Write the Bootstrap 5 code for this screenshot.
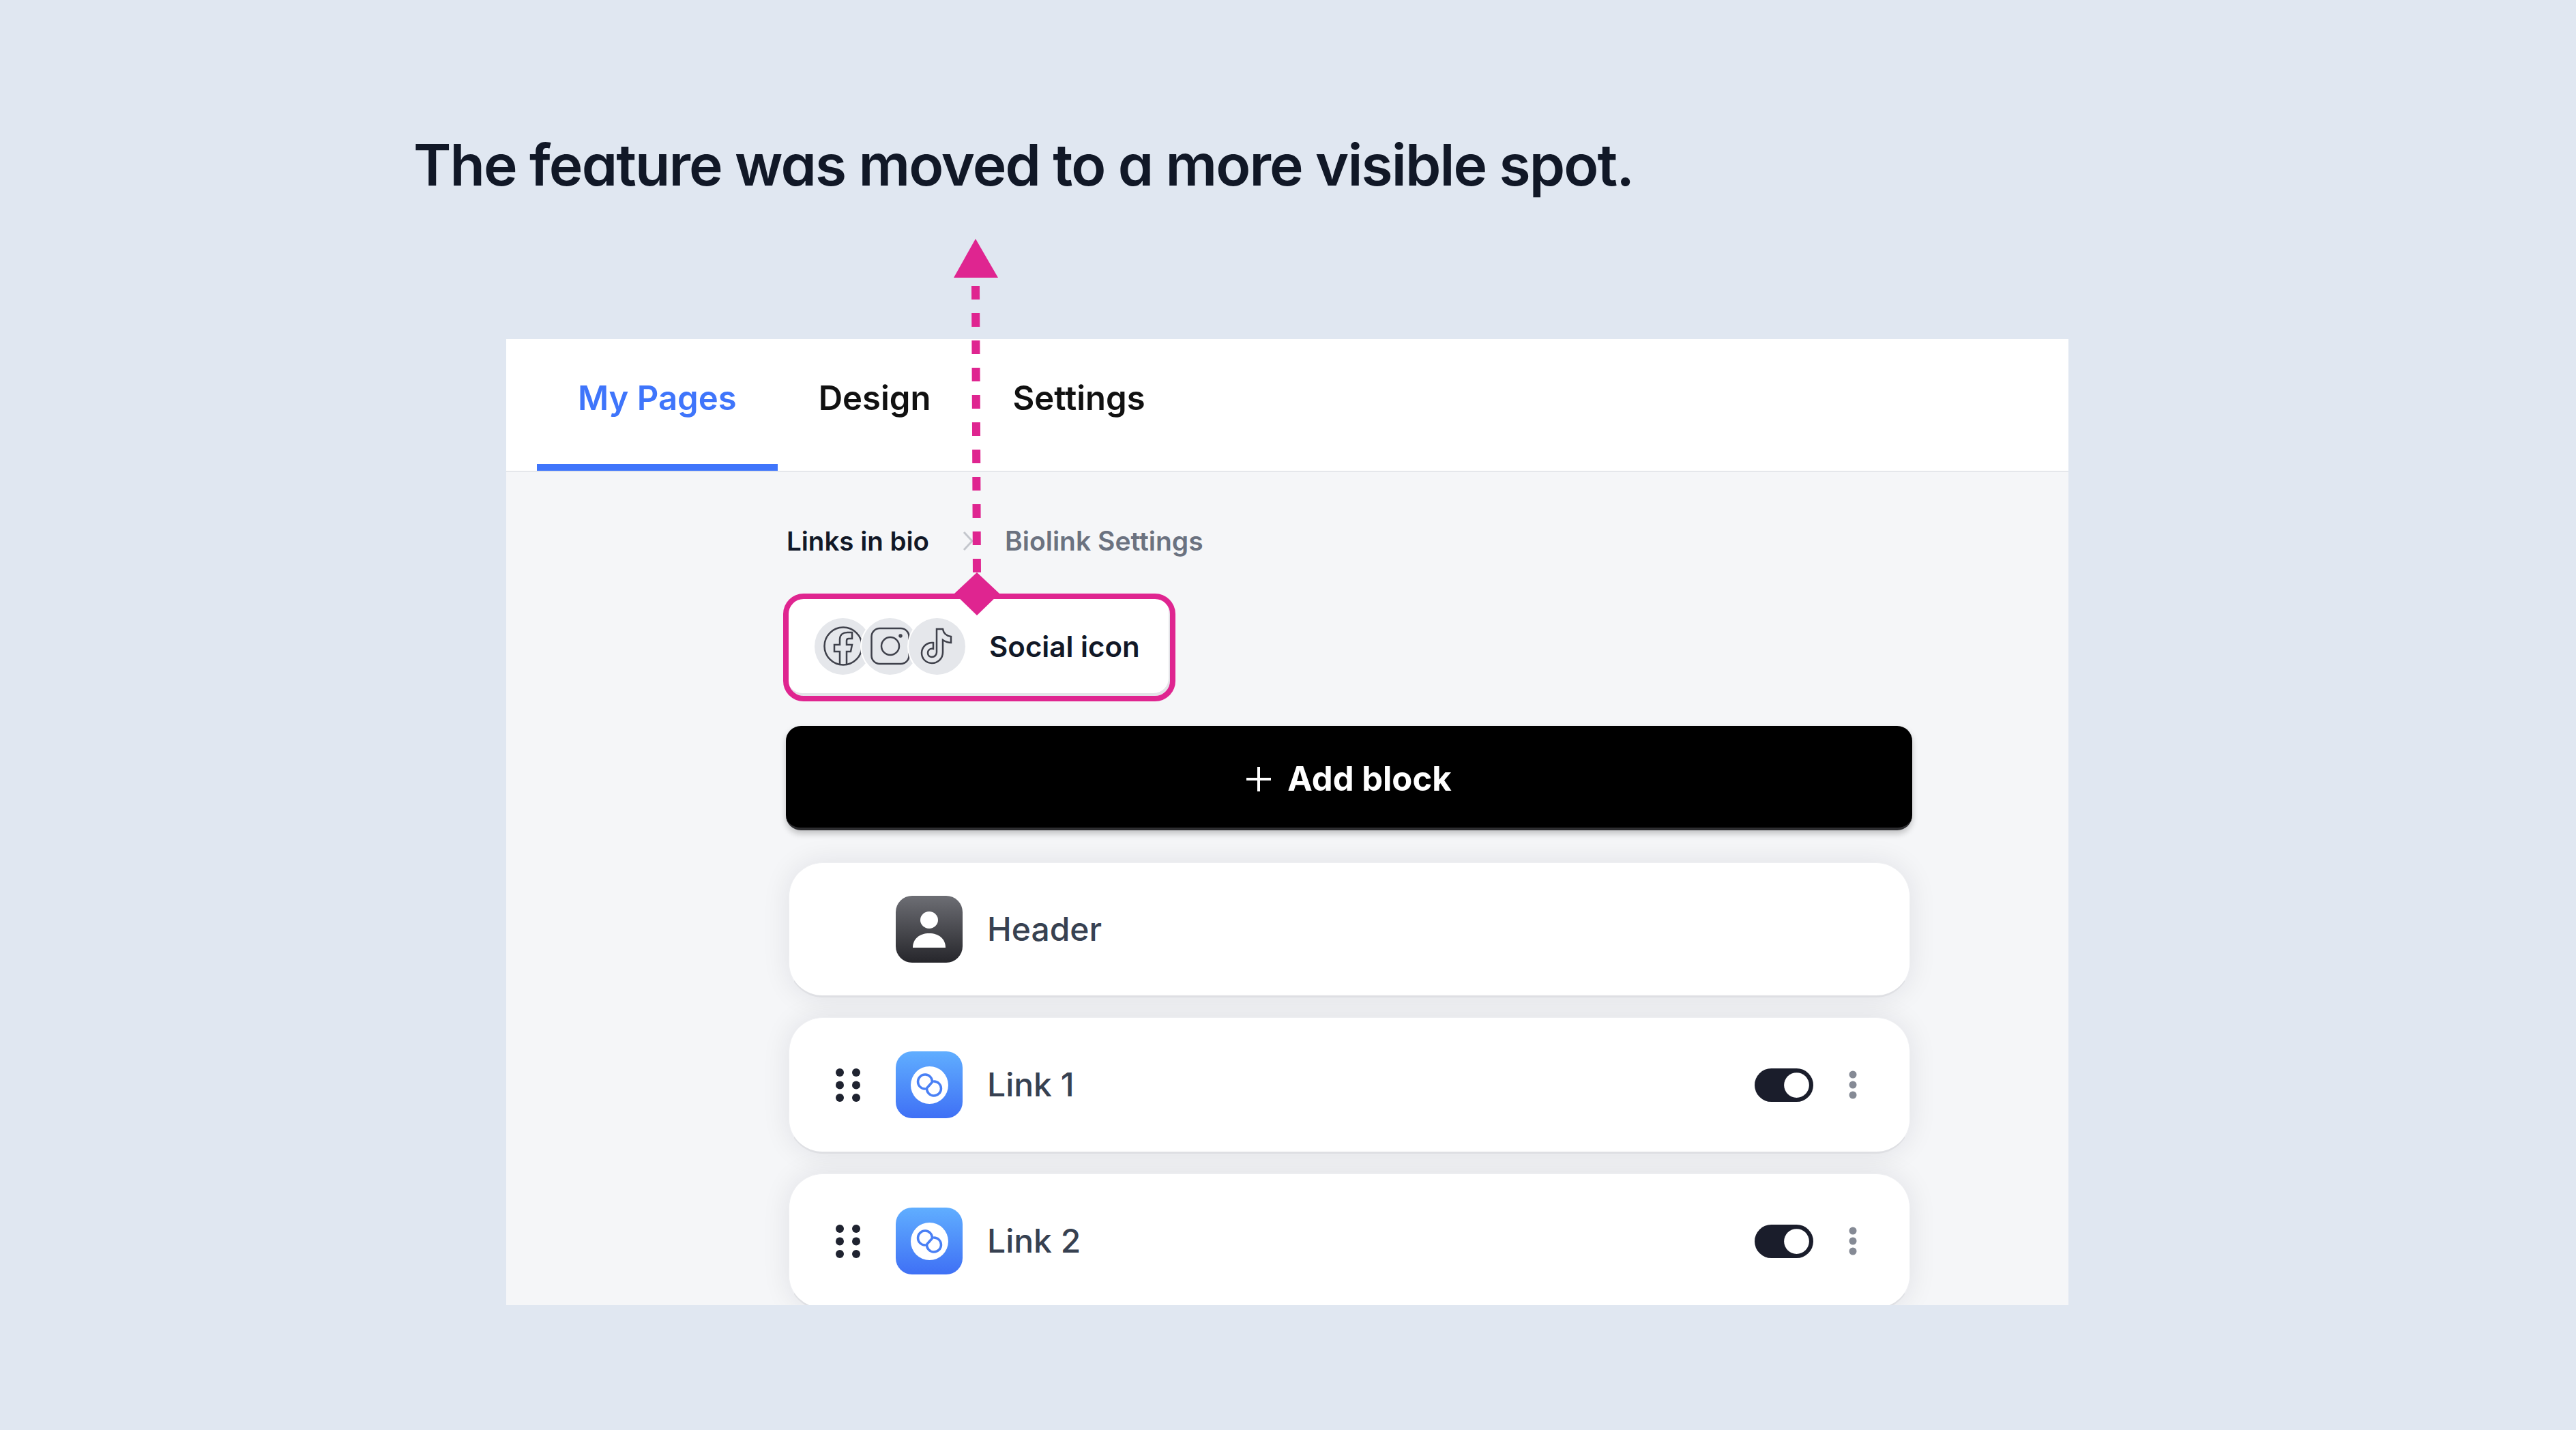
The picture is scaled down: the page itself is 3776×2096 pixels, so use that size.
<!DOCTYPE html>
<html lang="en">
  <head>
    <meta charset="UTF-8" />
    <meta name="viewport" content="width=device-width, initial-scale=1.0" />
    <title>Feature moved</title>
    <link
      href="https://cdn.jsdelivr.net/npm/bootstrap@5.3.0/dist/css/bootstrap.min.css"
      rel="stylesheet"
    />
    <style>
      body {
        background: #e0e7f1;
        font-family: Inter, "Liberation Sans", sans-serif;
        position: relative;
        min-height: 2096px;
        overflow: hidden;
      }
      .slide-title {
        font-size: 84px;
        font-weight: 600;
        line-height: 100px;
        letter-spacing: -1.9px;
        color: #111827;
        font-feature-settings: "cv11";
        margin: 0 0 0 606px;
        padding-top: 192px;
        height: 497px;
      }
      .app-panel {
        width: 2290px;
        height: 1416px;
        margin-left: 742px;
        overflow: hidden;
        background: #f5f6f8;
      }
      .top-tabs {
        background: #fff;
        padding-left: 45px;
        border-bottom: 2px solid #e5e7eb;
        height: 195px;
      }
      .top-tabs .nav-link {
        height: 193px;
        padding: 0 60px 10px;
        display: flex;
        align-items: center;
        font-size: 49px;
        font-weight: 600;
        color: #111;
        border-bottom: 10px solid transparent;
      }
      .top-tabs .nav-link.active {
        color: #3f75fb;
        border-bottom-color: #3f75fb;
      }
      .panel-body {
        padding: 76px 0 0 410px;
        width: 2061px;
      }
      .crumbs {
        height: 50px;
        margin: 0 0 52px 1px;
        font-size: 38.5px;
        line-height: 50px;
        font-weight: 600;
        color: #111827;
      }
      .crumbs .breadcrumb-item {
        padding: 0;
        display: flex;
        align-items: center;
      }
      .crumbs .breadcrumb-item::before {
        content: none;
      }
      .crumbs .breadcrumb-item.active {
        color: #6b7280;
        font-size: 39px;
      }
      .crumb-sep {
        margin: 0 46px 0 49px;
      }
      .social-box {
        width: 575px;
        height: 158px;
        margin-left: -4px;
        border: 8px solid #df2590;
        border-radius: 30px;
        background: #fff;
        padding: 0 0 4px 38px;
        box-shadow: inset -2px -4px 0 #e3e4e8;
        font-size: 42px;
        font-weight: 600;
        color: #111827;
      }
      .social-dot {
        width: 83px;
        height: 83px;
        border-radius: 50%;
        background: #e5e7eb;
        box-shadow: 0 0 0 2px #fff;
        position: relative;
        flex: none;
      }
      .social-dot + .social-dot {
        margin-left: -14px;
      }
      .social-label {
        margin-left: 35px;
      }
      .add-btn {
        --bs-btn-bg: #000;
        --bs-btn-border-color: #2d2d30;
        --bs-btn-color: #fff;
        width: 1651px;
        height: 153px;
        margin: 36px 0 47px;
        padding-top: 12px;
        border-width: 0 0 4px;
        border-radius: 22px;
        font-size: 49px;
        font-weight: 700;
        box-shadow: 0 5px 10px rgba(0, 0, 0, 0.22);
      }
      .block-list {
        width: 1644px;
        margin-left: 4px;
        gap: 29px;
      }
      .block-row {
        --bs-card-border-radius: 50px;
        --bs-card-inner-border-radius: 50px;
        --bs-card-border-color: #eeeff2;
        border-width: 1px 1px 3px;
        border-bottom-color: #dfe0e4;
        height: 200px;
        flex: none;
        box-shadow: 0 0 42px rgba(17, 24, 39, 0.09);
        font-size: 48px;
        font-weight: 550;
        color: #374151;
      }
      .block-row:first-child {
        height: 198px;
      }
      .drag-handle {
        margin: 0 52px 0 68px;
        flex: none;
      }
      .drag-space {
        width: 156px;
        flex: none;
      }
      .block-icon {
        width: 98px;
        height: 98px;
        border-radius: 24px;
        flex: none;
        margin-right: 36px;
      }
      .icon-person {
        background: linear-gradient(#6d6e74, #26262b);
      }
      .icon-link {
        background: linear-gradient(#60aeff, #3f70f5);
      }
      .block-row .form-check-input {
        width: 86px;
        height: 49px;
        margin: 0 52px 0 auto;
        border: 0;
        float: none;
      }
      .block-row .form-check-input:checked {
        background-color: #1a1d2b;
      }
      .block-row .form-switch {
        min-height: 0;
        padding: 0;
        margin: 0 0 0 auto;
      }
      .kebab {
        margin-right: 77px;
        flex: none;
      }
      .arrow-overlay {
        position: absolute;
        left: 1390px;
        top: 340px;
      }
    </style>
  </head>
  <body>
    <h1 class="slide-title">The feature was moved to a more visible spot.</h1>

    <div class="app-panel">
      <!-- Tabs -->
      <ul class="nav top-tabs">
        <li class="nav-item"><a class="nav-link active" href="#">My Pages</a></li>
        <li class="nav-item"><a class="nav-link" href="#">Design</a></li>
        <li class="nav-item"><a class="nav-link" href="#">Settings</a></li>
      </ul>

      <div class="panel-body">
        <ol class="breadcrumb crumbs">
          <li class="breadcrumb-item">Links in bio</li>
          <li class="breadcrumb-item active">
            <svg class="crumb-sep" width="16" height="30" viewBox="0 0 16 30" fill="none" stroke="#c4c7cd" stroke-width="3"><path d="M2 2l12 13L2 28" /></svg>
            Biolink Settings
          </li>
        </ol>

        <!-- Highlighted social block -->
        <div class="social-box d-flex align-items-center">
          <span class="social-dot d-flex align-items-center justify-content-center">
            <svg width="58" height="58" viewBox="0 0 58 58" fill="none" stroke="#3f414b" stroke-width="2.5">
              <circle cx="29" cy="29" r="27.5" />
              <path d="M24 57V37h-8V27h8v-8c0-7 5-10 11-10h7v9h-5c-2 0-3 1-3 3v6h8l-2 10h-6v20" />
            </svg>
          </span>
          <span class="social-dot d-flex align-items-center justify-content-center">
            <svg width="58" height="58" viewBox="0 0 58 58" fill="none" stroke="#3f414b" stroke-width="2.5">
              <rect x="1.5" y="3" width="55" height="52" rx="12" />
              <circle cx="29" cy="29" r="13" />
              <circle cx="44" cy="14" r="1.5" />
            </svg>
          </span>
          <span class="social-dot d-flex align-items-center justify-content-center">
            <svg width="58" height="58" viewBox="0 0 58 58" fill="none" stroke="#3f414b" stroke-width="2.5">
              <path d="M28 4h9c1 6 5 10 12 11v9c-5 0-9-2-12-4v18c0 9-7 16-16 16S6 47 6 39c0-9 8-16 17-15v9c-5-1-8 2-8 6s3 6 6 6c4 0 7-3 7-7z" />
            </svg>
          </span>
          <span class="social-label">Social icon</span>
        </div>

        <button class="btn d-flex align-items-center justify-content-center gap-4 add-btn" type="button">
          <svg width="36" height="36" viewBox="0 0 36 36" stroke="#fff" stroke-width="4"><path d="M18 0v36M0 18h36" /></svg>
          Add block
        </button>

        <div class="block-list d-flex flex-column">
          <div class="card flex-row align-items-center block-row">
            <span class="drag-space"></span>
            <span class="block-icon icon-person d-flex align-items-center justify-content-center">
              <svg width="48" height="53" viewBox="0 0 48 53" fill="#fff">
                <ellipse cx="24" cy="12.5" rx="13" ry="12.5" />
                <path d="M0 53c0-13 10-21 24-21s24 8 24 21z" />
              </svg>
            </span>
            Header
          </div>

          <div class="card flex-row align-items-center block-row">
            <svg class="drag-handle" width="36" height="49" viewBox="0 0 36 49" fill="#1f2330">
              <circle cx="6" cy="6" r="6" /><circle cx="30" cy="6" r="6" />
              <circle cx="6" cy="24.5" r="6" /><circle cx="30" cy="24.5" r="6" />
              <circle cx="6" cy="43" r="6" /><circle cx="30" cy="43" r="6" />
            </svg>
            <span class="block-icon icon-link d-flex align-items-center justify-content-center">
              <svg width="55" height="55" viewBox="0 0 55 55">
                <circle cx="27.5" cy="27.5" r="27.5" fill="#fff" />
                <g fill="none" stroke="#4a80f5" stroke-width="3.5" stroke-linecap="round">
                  <path d="M27.5 27.5l4-4.5A10.5 10.5 0 1 0 21 33" />
                  <path d="M27.5 27.5l-4 4.5A10.5 10.5 0 1 0 34 22" />
                </g>
              </svg>
            </span>
            Link 1
            <div class="form-check form-switch ms-auto d-flex">
              <input class="form-check-input" type="checkbox" role="switch" checked />
            </div>
            <svg class="kebab" width="12" height="42" viewBox="0 0 12 42" fill="#858a95">
              <circle cx="6" cy="6" r="5.5" /><circle cx="6" cy="21" r="5.5" /><circle cx="6" cy="36" r="5.5" />
            </svg>
          </div>

          <div class="card flex-row align-items-center block-row">
            <svg class="drag-handle" width="36" height="49" viewBox="0 0 36 49" fill="#1f2330">
              <circle cx="6" cy="6" r="6" /><circle cx="30" cy="6" r="6" />
              <circle cx="6" cy="24.5" r="6" /><circle cx="30" cy="24.5" r="6" />
              <circle cx="6" cy="43" r="6" /><circle cx="30" cy="43" r="6" />
            </svg>
            <span class="block-icon icon-link d-flex align-items-center justify-content-center">
              <svg width="55" height="55" viewBox="0 0 55 55">
                <circle cx="27.5" cy="27.5" r="27.5" fill="#fff" />
                <g fill="none" stroke="#4a80f5" stroke-width="3.5" stroke-linecap="round">
                  <path d="M27.5 27.5l4-4.5A10.5 10.5 0 1 0 21 33" />
                  <path d="M27.5 27.5l-4 4.5A10.5 10.5 0 1 0 34 22" />
                </g>
              </svg>
            </span>
            Link 2
            <div class="form-check form-switch ms-auto d-flex">
              <input class="form-check-input" type="checkbox" role="switch" checked />
            </div>
            <svg class="kebab" width="12" height="42" viewBox="0 0 12 42" fill="#858a95">
              <circle cx="6" cy="6" r="5.5" /><circle cx="6" cy="21" r="5.5" /><circle cx="6" cy="36" r="5.5" />
            </svg>
          </div>
        </div>
      </div>
    </div>

    <!-- Annotation arrow, sits over the panel -->
    <svg class="arrow-overlay" width="90" height="570" viewBox="0 0 90 570" fill="#df2590">
      <path d="M40 10L8 67h65z" />
      <line x1="40" y1="79" x2="42" y2="505" stroke="#df2590" stroke-width="12" stroke-dasharray="20 20" />
      <path d="M42 499l33 31-33 32-33-32z" />
    </svg>

    <script src="https://cdn.jsdelivr.net/npm/bootstrap@5.3.0/dist/js/bootstrap.bundle.min.js"></script>
  </body>
</html>
